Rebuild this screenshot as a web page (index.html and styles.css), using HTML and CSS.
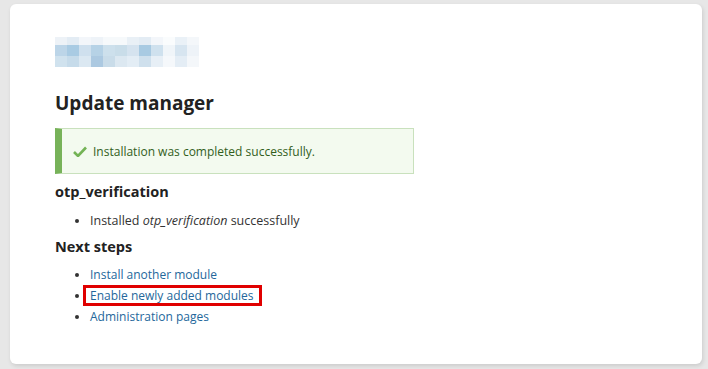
FILE: index.html
```html
<!DOCTYPE html>
<html lang="en">
<head>
    <meta charset="UTF-8">
    <title>Update manager</title>
    <link rel="stylesheet" href="styles.css">
</head>
<body>
    <div class="page">
        <div class="logo">
            <div class="logo-row top">
                <span style="background:#edf2f7"></span><span style="background:#e3ecf4"></span><span style="background:#f3f6fa"></span><span style="background:#eef3f8"></span><span style="background:#f6f9fb"></span><span style="background:#f6f9fb"></span><span style="background:#e9f0f6"></span><span style="background:#e3ecf4"></span><span style="background:#f3f6fa"></span><span style="background:#fafcfd"></span><span style="background:#eaf1f7"></span><span style="background:#f4f7fa"></span>
            </div>
            <div class="logo-row">
                <span style="background:#bcd5e8"></span><span style="background:#a9cbe3"></span><span style="background:#cfe0ee"></span><span style="background:#b6d2e6"></span><span style="background:#cde0ec"></span><span style="background:#c9dde9"></span><span style="background:#d5e3ef"></span><span style="background:#a8cae2"></span><span style="background:#cfe1ee"></span><span style="background:#f0f5f9"></span><span style="background:#d7e5f0"></span><span style="background:#eef3f8"></span>
            </div>
            <div class="logo-row">
                <span style="background:#d0e2ee"></span><span style="background:#c6dbea"></span><span style="background:#dbe8f2"></span><span style="background:#acc9e1"></span><span style="background:#c9dce9"></span><span style="background:#dce8f1"></span><span style="background:#e3edf5"></span><span style="background:#cfe0ed"></span><span style="background:#e7eff6"></span><span style="background:#f5f8fb"></span><span style="background:#e4edf5"></span><span style="background:#f4f7fa"></span>
            </div>
        </div>

        <h1 class="title">Update manager</h1>

        <div class="message">
            <svg class="check" width="14" height="11" viewBox="0 0 14 11">
                <path d="M1 6 L5 10 L13 1.5" fill="none" stroke="#73b355" stroke-width="2.6"/>
            </svg>
            <span>Installation was completed successfully.</span>
        </div>

        <h2 class="section">otp_verification</h2>
        <ul class="list result">
            <li>Installed <em>otp_verification</em> successfully</li>
        </ul>

        <h2 class="section">Next steps</h2>
        <ul class="list links">
            <li><a href="#">Install another module</a></li>
            <li><a href="#" class="marked">Enable newly added modules</a></li>
            <li><a href="#">Administration pages</a></li>
        </ul>
    </div>
</body>
</html>
```

FILE: styles.css
```css
body {
    margin: 0;
    padding: 4px 6px 6px 10px;
    background-color: #e7e7e7;
    font-family: "Open Sans", "Noto Sans", sans-serif;
    font-size: 12px;
    color: #333;
}
.page {
    height: 327px;
    background-color: #fff;
    border-radius: 6px;
    box-shadow: 1px 2px 4px rgba(0, 0, 0, 0.12);
    padding: 33px 45px 0 45px;
}
.logo {
    display: flex;
    flex-direction: column;
    width: 144px;
}
.logo-row {
    display: flex;
}
.logo-row span {
    width: 12px;
    height: 11px;
}
.logo-row.top span {
    height: 8px;
}
.title {
    margin: 24px 0 0 0;
    font-size: 19px;
    line-height: 24px;
    font-weight: bold;
    color: #222;
}
.message {
    display: flex;
    align-items: center;
    width: 340px;
    height: 44px;
    margin-top: 13px;
    padding-left: 11px;
    background-color: #f3faef;
    border: 1px solid #c9e1bd;
    border-left: 7px solid #77b259;
    color: #325e1c;
}
.check {
    margin-right: 6px;
}
.section {
    margin: 8px 0 0 0;
    font-size: 14.5px;
    line-height: 20px;
    font-weight: bold;
    color: #222;
}
.list + .section {
    margin-top: 6px;
}
.list {
    margin: 8px 0 0 0;
    padding-left: 35px;
    line-height: 21px;
}
.result {
    font-size: 12.5px;
}
.links {
    margin-top: 7px;
}
.links a {
    color: #24679b;
    text-decoration: none;
}
.marked {
    display: inline-block;
    line-height: 15px;
    margin-left: -7px;
    padding: 0 5px 0 4px;
    border: 3px solid #e00000;
}
```
